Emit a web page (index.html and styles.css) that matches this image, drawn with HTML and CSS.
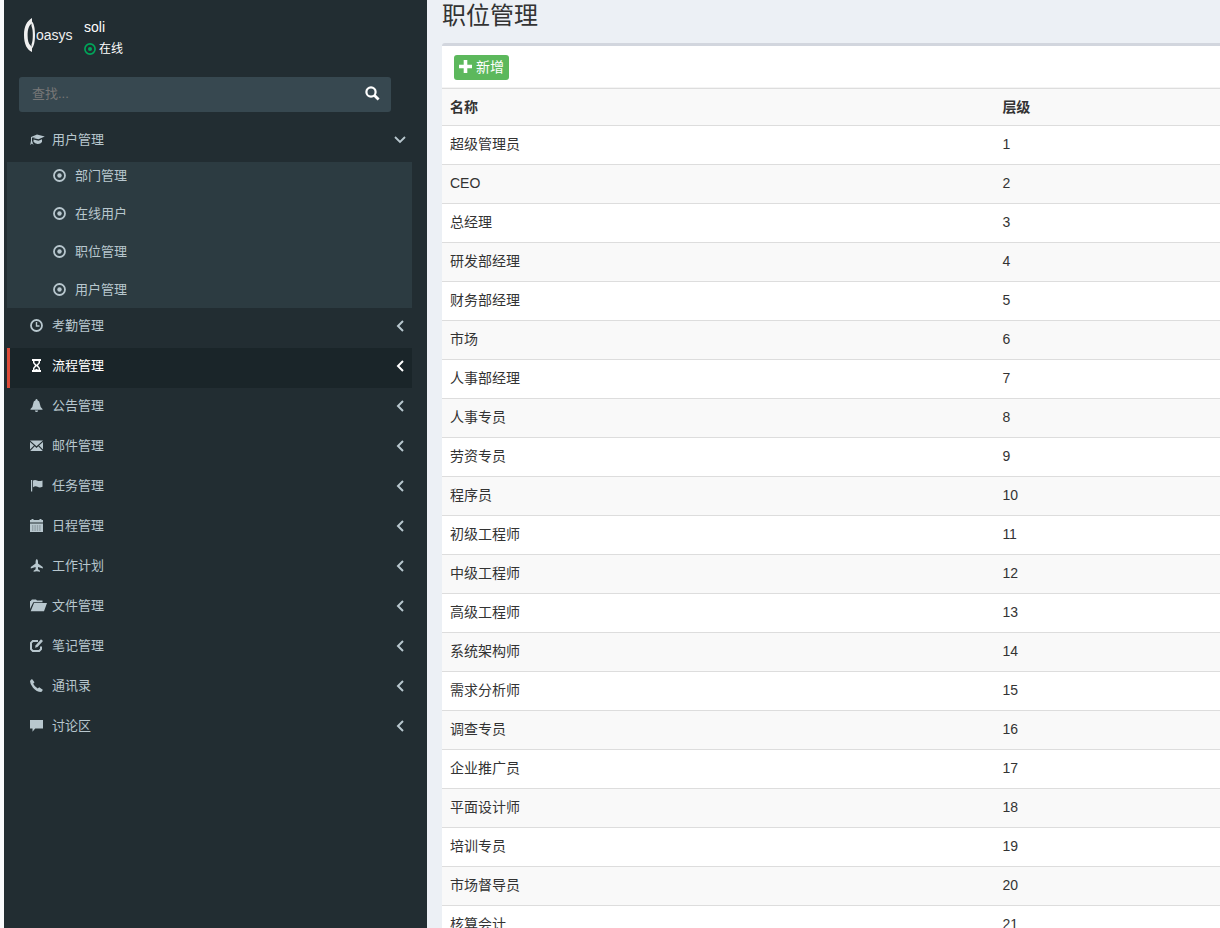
FILE: index.html
```html
<!DOCTYPE html>
<html lang="zh-CN">
<head>
<meta charset="utf-8">
<meta name="viewport" content="width=device-width, initial-scale=1">
<title>职位管理</title>
<link rel="stylesheet" href="styles.css">
</head>
<body>
<svg class="sprite" aria-hidden="true">
  <symbol id="i-record" viewBox="0 0 13 13"><circle cx="6.5" cy="6.5" r="5.5" fill="none" stroke="currentColor" stroke-width="1.8"/><circle cx="6.5" cy="6.5" r="2.2"/></symbol>
  <symbol id="i-cap" viewBox="0 0 15 13"><path d="M7 1.500 14.800 3.500 8.500 6.300 3 5l3-1.200-4 .9v3L3.500 12 2 10.500.2 12 1 7.700V4z"/><path d="M3.500 6.500 8.500 7.800l3.500-1.600v2.900q-1.500 2.200-4.500 2-2.500-.4-4-2.300z"/></symbol>
  <symbol id="i-clock" viewBox="0 0 13 13"><circle cx="6.500" cy="6.500" r="5.500" fill="none" stroke="currentColor" stroke-width="1.800"/><path d="M6.500 3v4H9.500" fill="none" stroke="currentColor" stroke-width="1.400"/></symbol>
  <symbol id="i-glass" viewBox="0 0 13 13"><path d="M2 0h9v2h-1v2L8 6.500 10 9v2h1v2H2v-2h1V9l2-2.500L3 4V2H2zM4.500 2v1.700l2 2 2-2V2zm2 5.200-2 2V11l2-1.300 2 1.300V9.200z" fill-rule="evenodd"/></symbol>
  <symbol id="i-bell" viewBox="0 0 13 13"><path d="M6.500 0q1 0 1 1.200Q9.700 2 9.900 5q.2 3.200 2.600 5v.8H.5V10Q2.900 8.200 3.100 5q.2-3 2.400-3.800Q5.500 0 6.500 0zM4.800 11.500h3.400Q7.800 13 6.500 13t-1.700-1.500z"/></symbol>
  <symbol id="i-mail" viewBox="0 0 13 13"><path d="M0 1.500h13L6.500 7.300zM0 2.900l4 3.700-4 4zM13 2.900v7.700l-4-4zM4.700 7.300l1.800 1.600 1.800-1.600 4.500 4.700H.2z"/></symbol>
  <symbol id="i-flag" viewBox="0 0 13 13"><path d="M1 1h1.200v11.500H1zM3 1.500q2-1 4 0t5.500 0v6.300q-3 1.200-5 0t-4.500.5z"/></symbol>
  <symbol id="i-calendar" viewBox="0 0 13 13"><path d="M0 1h1.500V0h2v1h6V0h2v1H13v2.500H0zM0 4.500h13V13H0z"/><path d="M2 7h9M2 9h9M2 11h9" fill="none" stroke="#222d32" stroke-opacity=".6" stroke-width=".8" stroke-dasharray="1.400 1"/></symbol>
  <symbol id="i-plane" viewBox="0 0 13 13"><path d="M6.800 0Q8 .5 8 2.500v2L12.800 8v1.400L8 8v2.200l2 1.500v1.100l-3.200-.6-3.200.6v-1.100l2-1.500V8L.8 9.400V8l4.800-3.500v-2Q5.600.5 6.800 0z"/></symbol>
  <symbol id="i-folder" viewBox="0 0 17 13"><path d="M0 10V2h1V1.500L2 .5h4l1 1h5.500V3.300H3.300zM4 4h13l-3 8.200H.7z"/></symbol>
  <symbol id="i-edit" viewBox="0 0 13 13"><path d="M8 2H2.800L1 3.800v6.400L2.800 12h6.400l1.800-1.800V7.500" fill="none" stroke="currentColor" stroke-width="2"/><path d="M11 .3 13 2 7.500 8 5 8.800l.7-2.600z"/></symbol>
  <symbol id="i-phone" viewBox="0 0 13 13"><path d="M2 0 4.500 3.200 3.200 4.800q1.400 3 4.500 4.800L9.200 8.200l3.600 2.600q-.3 1.600-1.600 2.200Q6.500 13 3 8.800 0 5 0 2.300 .4.700 2 0z"/></symbol>
  <symbol id="i-comment" viewBox="0 0 13 13"><path d="M0 1h13v8.500H5.200L2.500 12.800V9.500H0z"/></symbol>
  <symbol id="i-left" viewBox="0 0 8 12"><path d="M7 1 2 6l5 5" fill="none" stroke="currentColor" stroke-width="2"/></symbol>
  <symbol id="i-down" viewBox="0 0 12 8"><path d="M1 1l5 5 5-5" fill="none" stroke="currentColor" stroke-width="1.800"/></symbol>
  <symbol id="i-search" viewBox="0 0 15 15"><circle cx="6" cy="6" r="4.600" fill="none" stroke="currentColor" stroke-width="2.200"/><path d="M9.300 9.300l4.300 4.300" stroke="currentColor" stroke-width="2.800"/></symbol>
  <symbol id="i-plus" viewBox="0 0 13 13"><path d="M4.700 0h3.600v4.700H13v3.600H8.300V13H4.700V8.300H0V4.700h4.700z"/></symbol>
  <symbol id="i-logo" viewBox="0 0 11 34"><path d="M8 0v5.500C5 7 3.600 11 3.600 17.500c0 5 1 8.500 3 10L8 29v5C3 32 0 26 0 17S3 3 8 0z"/><path d="M7.500 3C10 5 11 10 11 17s-1 11.500-3.500 14v-4.500C8.500 24 8.800 21 8.800 17s-.3-6.500-1.300-9z"/></symbol>
</svg>
<div class="app">
  <aside class="sidebar">
    <div class="user">
      <div class="logo"><svg class="logo-mark"><use href="#i-logo"/></svg><span>oasys</span></div>
      <div class="user-info">
        <div>soli</div>
        <a class="status" href="#"><svg class="icon"><use href="#i-record"/></svg>在线</a>
      </div>
    </div>
    <form class="search">
      <input type="text" placeholder="查找..." aria-label="查找">
      <button type="button" aria-label="搜索"><svg><use href="#i-search"/></svg></button>
    </form>
    <nav>
      <ul class="menu">
        <li><a href="#"><svg class="icon cap"><use href="#i-cap"/></svg><span>用户管理</span><svg class="down"><use href="#i-down"/></svg></a>
          <ul class="submenu">
            <li><a href="#"><svg class="icon"><use href="#i-record"/></svg>部门管理</a></li>
            <li><a href="#"><svg class="icon"><use href="#i-record"/></svg>在线用户</a></li>
            <li><a href="#"><svg class="icon"><use href="#i-record"/></svg>职位管理</a></li>
            <li><a href="#"><svg class="icon"><use href="#i-record"/></svg>用户管理</a></li>
          </ul>
        </li>
        <li><a href="#"><svg class="icon"><use href="#i-clock"/></svg><span>考勤管理</span><svg class="left"><use href="#i-left"/></svg></a></li>
        <li><a class="active" href="#"><svg class="icon"><use href="#i-glass"/></svg><span>流程管理</span><svg class="left"><use href="#i-left"/></svg></a></li>
        <li><a href="#"><svg class="icon"><use href="#i-bell"/></svg><span>公告管理</span><svg class="left"><use href="#i-left"/></svg></a></li>
        <li><a href="#"><svg class="icon"><use href="#i-mail"/></svg><span>邮件管理</span><svg class="left"><use href="#i-left"/></svg></a></li>
        <li><a href="#"><svg class="icon"><use href="#i-flag"/></svg><span>任务管理</span><svg class="left"><use href="#i-left"/></svg></a></li>
        <li><a href="#"><svg class="icon"><use href="#i-calendar"/></svg><span>日程管理</span><svg class="left"><use href="#i-left"/></svg></a></li>
        <li><a href="#"><svg class="icon"><use href="#i-plane"/></svg><span>工作计划</span><svg class="left"><use href="#i-left"/></svg></a></li>
        <li><a href="#"><svg class="icon folder"><use href="#i-folder"/></svg><span>文件管理</span><svg class="left"><use href="#i-left"/></svg></a></li>
        <li><a href="#"><svg class="icon"><use href="#i-edit"/></svg><span>笔记管理</span><svg class="left"><use href="#i-left"/></svg></a></li>
        <li><a href="#"><svg class="icon"><use href="#i-phone"/></svg><span>通讯录</span><svg class="left"><use href="#i-left"/></svg></a></li>
        <li><a href="#"><svg class="icon"><use href="#i-comment"/></svg><span>讨论区</span><svg class="left"><use href="#i-left"/></svg></a></li>
      </ul>
    </nav>
  </aside>
  <main class="content">
    <h1>职位管理</h1>
    <section class="box">
      <div class="box-header"><button class="add" type="button"><svg class="icon"><use href="#i-plus"/></svg>新增</button></div>
      <table>
        <thead><tr><th class="name" scope="col">名称</th><th scope="col">层级</th></tr></thead>
        <tbody>
          <tr><td>超级管理员</td><td>1</td></tr>
          <tr><td>CEO</td><td>2</td></tr>
          <tr><td>总经理</td><td>3</td></tr>
          <tr><td>研发部经理</td><td>4</td></tr>
          <tr><td>财务部经理</td><td>5</td></tr>
          <tr><td>市场</td><td>6</td></tr>
          <tr><td>人事部经理</td><td>7</td></tr>
          <tr><td>人事专员</td><td>8</td></tr>
          <tr><td>劳资专员</td><td>9</td></tr>
          <tr><td>程序员</td><td>10</td></tr>
          <tr><td>初级工程师</td><td>11</td></tr>
          <tr><td>中级工程师</td><td>12</td></tr>
          <tr><td>高级工程师</td><td>13</td></tr>
          <tr><td>系统架构师</td><td>14</td></tr>
          <tr><td>需求分析师</td><td>15</td></tr>
          <tr><td>调查专员</td><td>16</td></tr>
          <tr><td>企业推广员</td><td>17</td></tr>
          <tr><td>平面设计师</td><td>18</td></tr>
          <tr><td>培训专员</td><td>19</td></tr>
          <tr><td>市场督导员</td><td>20</td></tr>
          <tr><td>核算会计</td><td>21</td></tr>
        </tbody>
      </table>
    </section>
  </main>
</div>
</body>
</html>
```
FILE: styles.css
```css
* { box-sizing: border-box; }
body {
  margin: 0;
  background: #f9fafc;
  color: #333;
  font: 14px/20px "Liberation Sans", "Noto Sans CJK SC", sans-serif;
}
svg { fill: currentColor; flex: none; display: block; }
a { color: inherit; text-decoration: none; }
ul { list-style: none; margin: 0; padding: 0; }
.sprite { position: absolute; width: 0; height: 0; }
.icon { width: 13px; height: 13px; }

.app { display: flex; height: 100vh; padding-left: 4px; overflow: hidden; }

.sidebar {
  flex: 0 0 423px;
  padding: 16px 15px 0 3px;
  background: #222d32;
  color: #b8c7ce;
  font-size: 13px;
}
.user { display: flex; gap: 12px; padding-left: 17px; height: 61px; color: #fff; }
.logo {
  display: flex;
  align-items: center;
  gap: 1px;
  width: 48px;
  height: 38px;
  color: #f0f0f0;
  font: 14px/20px "Liberation Sans", sans-serif;
}
.logo-mark { width: 11px; height: 34px; }
.user-info { padding-top: 1px; font-size: 14px; }
.status { display: flex; align-items: center; gap: 3px; margin-top: 2px; font-size: 12px; }
.status .icon { width: 12px; height: 12px; color: #00a65a; }

.search {
  display: flex;
  height: 35px;
  margin: 0 21px 10px 12px;
  border-radius: 3px;
  background: #374850;
}
.search input {
  flex: 1;
  min-width: 0;
  padding: 0 12px 2px 13px;
  border: 0;
  background: none;
  color: #fff;
  font: inherit;
  outline: 0;
}
.search input::placeholder { color: #777; }
.search button { padding: 0 11px 2px; border: 0; background: none; color: #fff; }
.search svg { width: 15px; height: 15px; }

.menu > li > a {
  display: flex;
  align-items: center;
  height: 40px;
  padding: 0 8px 4px 20px;
  border-left: 3px solid transparent;
}
.menu > li > a.active { background: #1a2529; border-left-color: #dd4b39; color: #fff; }
.menu .icon { margin-bottom: 2px; }
.menu span { flex: 1; margin-left: 9px; }
.menu .cap { width: 15px; margin-right: -2px; }
.menu .folder { width: 17px; margin-right: -4px; }
.left { width: 8px; height: 12px; }
.down { width: 12px; height: 8px; margin-right: -2px; }
.submenu {
  display: flex;
  flex-direction: column;
  gap: 10px;
  padding-bottom: 4px;
  background: #2c3b41;
}
.submenu a { display: flex; align-items: center; gap: 9px; height: 28px; padding-left: 46px; }

.content { flex: 1; min-width: 0; padding-left: 15px; background: #ecf0f5; }
h1 { margin: 0; padding-bottom: 11px; font-size: 24px; line-height: 32px; font-weight: 400; }
.box { border-top: 3px solid #d2d6de; border-radius: 3px 0 0 0; background: #fff; }
.box-header { padding: 9px 12px 7px; border-bottom: 1px solid #f4f4f4; }
.add {
  display: flex;
  align-items: center;
  gap: 4px;
  height: 25px;
  padding: 0 5px 2px;
  border: 0;
  border-radius: 3px;
  background: #5cb85c;
  color: #fff;
  font: inherit;
}
table { width: 100%; border-collapse: separate; border-spacing: 0; }
th, td { padding: 8px 8px 10px; border-top: 1px solid #ddd; text-align: left; }
th { padding-bottom: 8px; background: #f9f9f9; }
.name { width: 71%; }
tbody tr:nth-child(even) { background: #f9f9f9; }
```
